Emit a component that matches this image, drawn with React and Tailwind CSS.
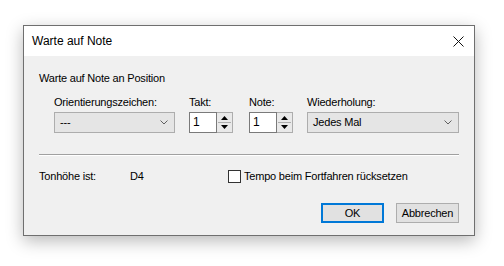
import React from 'react';

const uiFont = { fontFamily: '"Liberation Sans", Arial, sans-serif' };

// Small gray chevron used by the combo boxes
const Chevron = () => (
  <svg width="8" height="5" viewBox="0 0 8 5" className="shrink-0">
    <path d="M0.5 0.5 L4 4 L7.5 0.5" fill="none" stroke="#606060" strokeWidth="1" />
  </svg>
);

const ComboBox = ({ value, width }) => (
  <div
    className={`h-[21px] ${width} bg-[#e5e5e5] border border-[#adadad] flex items-center justify-between pl-[5px] pr-[6px] text-[11px] text-black`}
  >
    <span>{value}</span>
    <Chevron />
  </div>
);

const Spinner = ({ value }) => (
  <div className="flex h-[21px] w-[44px]">
    <div className="w-[28px] h-full bg-white border border-[#7a7a7a] flex items-center pl-[3px] text-[12px]">
      {value}
    </div>
    <div className="w-[16px] h-full flex flex-col border border-l-0 border-[#adadad] bg-[#e9e9e9] p-[1px]">
      <div className="flex-1 flex items-center justify-center border-b border-[#adadad]">
        <svg width="7" height="4" viewBox="0 0 7 4">
          <path d="M0 4 L3.5 0 L7 4 Z" fill="#000" />
        </svg>
      </div>
      <div className="flex-1 flex items-center justify-center">
        <svg width="7" height="4" viewBox="0 0 7 4">
          <path d="M0 0 L3.5 4 L7 0 Z" fill="#000" />
        </svg>
      </div>
    </div>
  </div>
);

const App = () => {
  return (
    <div className="w-[504px] h-[266px] bg-white overflow-hidden pt-[25px] pl-[23px]" style={uiFont}>
      <div className="w-[452px] h-[211px] border border-[#6f6f6f] bg-[#f0f0f0] flex flex-col shadow-[0_5px_16px_rgba(0,0,0,0.28)]">
        {/* Title bar */}
        <div className="h-[30px] bg-white flex items-center justify-between pl-[8px] pr-[10px]">
          <span className="text-[12px] text-black">Warte auf Note</span>
          <svg width="11" height="11" viewBox="0 0 11 11">
            <path d="M0.5 0.5 L10.5 10.5 M10.5 0.5 L0.5 10.5" stroke="#111" strokeWidth="1" />
          </svg>
        </div>

        {/* Content */}
        <div className="flex flex-col px-[15px] text-[11px] text-black leading-[13px] tracking-[-0.2px]">
          <div className="mt-[16px]">Warte auf Note an Position</div>

          <div className="pl-[15px] flex flex-col">
            <div className="flex mt-[11px]">
              <div className="w-[121px]">Orientierungszeichen:</div>
              <div className="w-[44px] ml-[14px]">Takt:</div>
              <div className="w-[44px] ml-[16px]">Note:</div>
              <div className="ml-[14px]">Wiederholung:</div>
            </div>
            <div className="flex mt-[3px]">
              <ComboBox value="---" width="w-[121px]" />
              <div className="ml-[14px]">
                <Spinner value="1" />
              </div>
              <div className="ml-[16px]">
                <Spinner value="1" />
              </div>
              <div className="ml-[14px]">
                <ComboBox value="Jedes Mal" width="w-[152px]" />
              </div>
            </div>
          </div>

          {/* Etched separator */}
          <div className="mt-[21px] border-t border-[#a0a0a0] border-b border-b-white"></div>

          <div className="flex items-center mt-[14px] h-[13px]">
            <span className="w-[91px]">Tonhöhe ist:</span>
            <span className="w-[98px]">D4</span>
            <div className="w-[13px] h-[13px] border border-[#333] bg-white"></div>
            <span className="ml-[3px]">Tempo beim Fortfahren rücksetzen</span>
          </div>

          <div className="flex justify-end mt-[20px] gap-[12px]">
            <button className="w-[63px] h-[20px] bg-[#e1e1e1] border-2 border-[#0078d7] text-[11px] flex items-center justify-center">
              OK
            </button>
            <button className="w-[63px] h-[20px] bg-[#e1e1e1] border border-[#adadad] text-[11px] flex items-center justify-center">
              Abbrechen
            </button>
          </div>
        </div>
      </div>
    </div>
  );
};

export default App;
